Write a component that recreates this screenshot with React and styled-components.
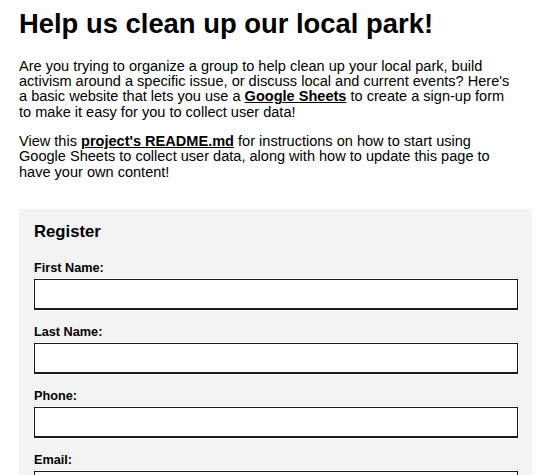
import React from 'react'
import styled, { createGlobalStyle } from 'styled-components'

const GlobalStyle = createGlobalStyle`
  body {
    margin: 0;
    padding: 0 20px 0 19px;
    background: #fff;
    color: #000;
    font-family: Arial, "Liberation Sans", sans-serif;
  }
`

const Page = styled.main`
  display: flex;
  flex-direction: column;
`

const Heading = styled.h1`
  font-size: 27.4px;
  font-weight: bold;
  margin: 8px 0 18.5px;
  line-height: 32px;
`

const Intro = styled.p`
  font-size: 14.55px;
  line-height: 15.4px;
  margin: 0 0 13.7px;
  white-space: nowrap;
`

const Link = styled.a`
  color: #000;
  font-weight: bold;
  text-decoration: underline;
`

const FormBox = styled.section`
  margin-top: 15px;
  background: #f3f3f3;
  padding: 13px 14px 20px 15px;
`

const FormTitle = styled.h2`
  font-size: 16.7px;
  font-weight: bold;
  line-height: 20px;
  margin: 0 0 19px;
`

const Field = styled.div`
  display: flex;
  flex-direction: column;
  margin-bottom: 15px;
`

const Label = styled.label`
  font-size: 12.7px;
  font-weight: bold;
  line-height: 15px;
  margin-bottom: 3px;
`

const Input = styled.input`
  box-sizing: border-box;
  width: 100%;
  height: 31px;
  border: 1px solid #1a1a1a;
  border-bottom-width: 2px;
  box-shadow: 0 0 0 1px #fff;
  background: #fff;
  font: inherit;
  padding: 4px 6px;
`

const fields = [
  { id: 'firstName', label: 'First Name:', type: 'text' },
  { id: 'lastName', label: 'Last Name:', type: 'text' },
  { id: 'phone', label: 'Phone:', type: 'tel' },
  { id: 'email', label: 'Email:', type: 'email' },
]

const App = () => {
  return (
    <Page>
      <GlobalStyle />
      <Heading>Help us clean up our local park!</Heading>
      <Intro>
        Are you trying to organize a group to help clean up your local park, build
        <br />
        activism around a specific issue, or discuss local and current events? Here's
        <br />
        a basic website that lets you use a <Link href="#">Google Sheets</Link> to
        create a sign-up form
        <br />
        to make it easy for you to collect user data!
      </Intro>
      <Intro>
        View this <Link href="#">project's README.md</Link> for instructions on
        how to start using
        <br />
        Google Sheets to collect user data, along with how to update this page to
        <br />
        have your own content!
      </Intro>

      <FormBox>
        <FormTitle>Register</FormTitle>
        <form>
          {fields.map((f) => (
            <Field key={f.id}>
              <Label htmlFor={f.id}>{f.label}</Label>
              <Input id={f.id} name={f.id} type={f.type} />
            </Field>
          ))}
        </form>
      </FormBox>
    </Page>
  )
}

export default App
